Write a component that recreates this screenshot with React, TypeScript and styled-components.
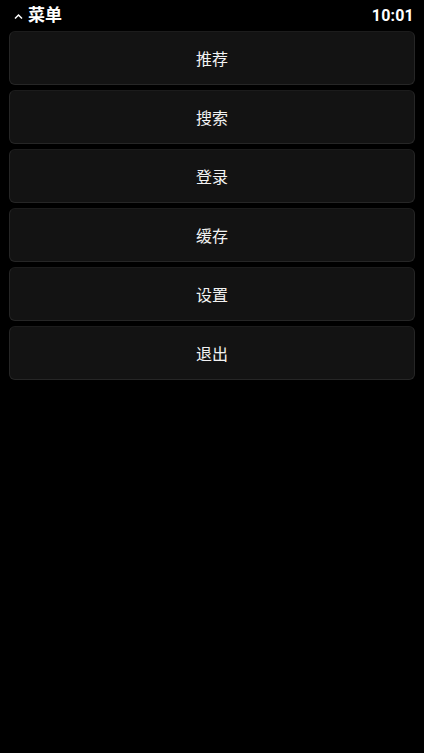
import * as React from 'react';
import styled, { createGlobalStyle } from 'styled-components';

const GlobalStyle = createGlobalStyle`
  html, body {
    margin: 0;
    padding: 0;
    background: #000;
  }
  body {
    font-family: Roboto, "Noto Sans CJK SC", "Noto Sans", sans-serif;
    color: #fff;
  }
`;

const Screen = styled("div")`
  width: 424px;
  height: 753px;
  background: #000;
  display: flex;
  flex-direction: column;
`;

const TopBar = styled("div")`
  height: 31px;
  display: flex;
  align-items: center;
  justify-content: space-between;
  padding: 0 10px 0 13px;
  box-sizing: border-box;
`;

const Title = styled("div")`
  display: flex;
  align-items: center;
  gap: 4px;
  font-size: 17px;
  font-weight: 700;
  line-height: 1;
`;

const Clock = styled("div")`
  font-size: 16px;
  font-weight: 700;
  letter-spacing: 0.2px;
`;

const MenuList = styled("div")`
  display: flex;
  flex-direction: column;
  gap: 5px;
  padding: 0 9px;
`;

const MenuItem = styled("button")`
  height: 54px;
  width: 100%;
  background: #131313;
  border: 1px solid #262626;
  border-top-color: #1c1c1c;
  border-radius: 6px;
  color: #f2f2f2;
  font-family: "Noto Sans CJK SC", "Noto Sans", sans-serif;
  font-size: 16px;
  display: flex;
  align-items: center;
  justify-content: center;
  padding: 0;
  cursor: pointer;
`;

const items = ["推荐", "搜索", "登录", "缓存", "设置", "退出"];

const App = (): JSX.Element => {
  return (
    <Screen>
      <GlobalStyle />
      <TopBar>
        <Title>
          <svg width="11" height="8" viewBox="0 0 11 8">
            <path d="M2 6.5 L5.5 3 L9 6.5" stroke="#fff" strokeWidth="1.5" fill="none" />
          </svg>
          <span>菜单</span>
        </Title>
        <Clock>10:01</Clock>
      </TopBar>
      <MenuList>
        {items.map((label) => (
          <MenuItem key={label}>{label}</MenuItem>
        ))}
      </MenuList>
    </Screen>
  );
};

export default App;
